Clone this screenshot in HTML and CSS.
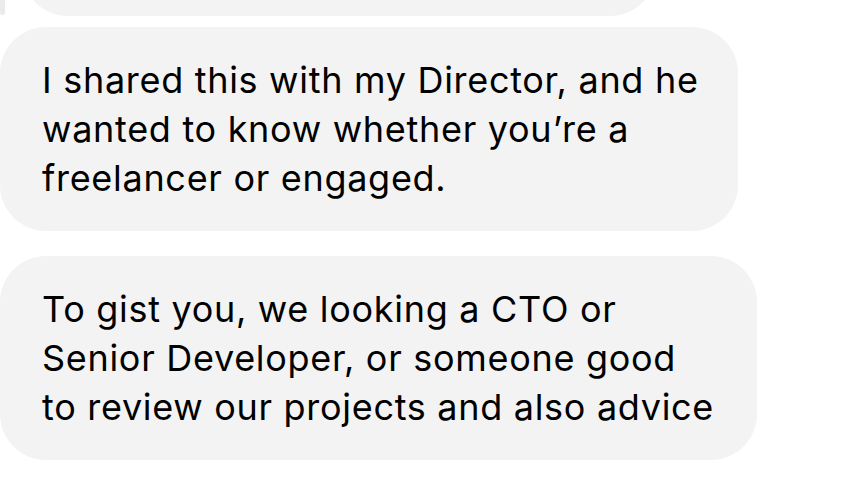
FILE: index.html
```html
<!DOCTYPE html>
<html>
<head>
<meta charset="utf-8">
<link rel="stylesheet" href="styles.css">
</head>
<body>
<div class="thread">
  <div class="row row-top">
    <div class="edge"></div>
    <div class="bubble bubble-prev"></div>
  </div>
  <div class="bubble bubble-a">I shared this with my Director, and he<br>wanted to know whether you’re a<br>freelancer or engaged.</div>
  <div class="bubble bubble-b">To gist you, we looking a CTO or<br>Senior Developer, or someone good<br>to review our projects and also advice</div>
</div>
</body>
</html>
```
FILE: styles.css
```css
html, body {
  margin: 0;
  padding: 0;
  background: #ffffff;
}
body {
  width: 862px;
  height: 485px;
  overflow: hidden;
  font-family: Inter, "Liberation Sans", sans-serif;
  color: #000;
}
.thread {
  display: flex;
  flex-direction: column;
  align-items: flex-start;
}
.row-top {
  display: flex;
  align-items: flex-start;
  gap: 17px;
  height: 16px;
  overflow: visible;
}
.edge {
  width: 5px;
  height: 15px;
  background: #ebebeb;
  border-radius: 0 0 3px 3px;
}
.bubble {
  background: #f3f3f3;
  border-radius: 46px;
  box-sizing: border-box;
  font-size: 36px;
  line-height: 49px;
  letter-spacing: 0.7px;
  padding: 29px 0 28px 42px;
  white-space: nowrap;
}
.bubble-prev {
  width: 634px;
  height: 100px;
  margin-top: -84px;
  padding: 0;
}
.bubble-a {
  width: 738px;
  margin-top: 11px;
}
.bubble-b {
  width: 757px;
  margin-top: 25px;
}
```
